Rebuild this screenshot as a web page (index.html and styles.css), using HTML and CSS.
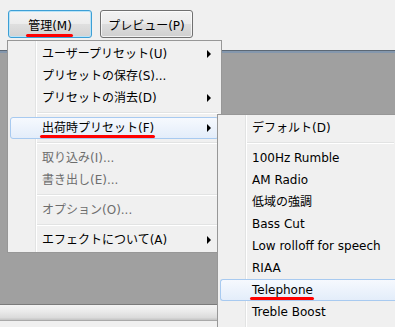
FILE: index.html
```html
<!DOCTYPE html>
<html lang="ja">
<head>
<meta charset="utf-8">
<link rel="stylesheet" href="styles.css">
</head>
<body>
<div class="window">
  <div class="toolbar">
    <button class="btn btn-focus"><span class="mark">管理(M)</span></button>
    <button class="btn btn-preview">プレビュー(P)</button>
  </div>
  <div class="rule"></div>
  <div class="pane"></div>
  <div class="statusbar"></div>

  <div class="menu menu-main">
    <div class="item"><span class="label">ユーザープリセット(U)</span><span class="arrow"></span></div>
    <div class="item"><span class="label">プリセットの保存(S)...</span></div>
    <div class="item"><span class="label">プリセットの消去(D)</span><span class="arrow"></span></div>
    <div class="sep"></div>
    <div class="item hot"><span class="label"><span class="mark">出荷時プリセット(F)</span></span><span class="arrow"></span></div>
    <div class="sep"></div>
    <div class="item off"><span class="label">取り込み(I)...</span></div>
    <div class="item off"><span class="label">書き出し(E)...</span></div>
    <div class="sep"></div>
    <div class="item off"><span class="label">オプション(O)...</span></div>
    <div class="sep"></div>
    <div class="item"><span class="label">エフェクトについて(A)</span><span class="arrow"></span></div>
  </div>

  <div class="menu menu-sub">
    <div class="item"><span class="label">デフォルト(D)</span></div>
    <div class="sep"></div>
    <div class="item"><span class="label">100Hz Rumble</span></div>
    <div class="item"><span class="label">AM Radio</span></div>
    <div class="item"><span class="label">低域の強調</span></div>
    <div class="item"><span class="label">Bass Cut</span></div>
    <div class="item"><span class="label">Low rolloff for speech</span></div>
    <div class="item"><span class="label">RIAA</span></div>
    <div class="item hot"><span class="label"><span class="mark">Telephone</span></span></div>
    <div class="item"><span class="label">Treble Boost</span></div>
  </div>
</div>
</body>
</html>
```
FILE: styles.css
```css
* { box-sizing: border-box; }

html, body {
  margin: 0;
  padding: 0;
  background: #f0f0f0;
}

body {
  width: 395px;
  height: 327px;
  overflow: hidden;
  font-family: "DejaVu Sans", "Noto Sans CJK JP", sans-serif;
  font-size: 12px;
  color: #000;
}

.window {
  position: relative;
  width: 395px;
  height: 327px;
  overflow: hidden;
  display: flex;
  flex-direction: column;
}

.toolbar {
  display: flex;
  gap: 8px;
  padding: 10px 0 12px 8px;
  height: 50px;
  background: #f0f0f0;
}

.btn {
  height: 28px;
  margin: 0;
  padding: 0;
  font: inherit;
  color: #000;
  border: 1px solid #707070;
  border-radius: 3px;
  background: linear-gradient(#f2f2f2 0%, #ebebeb 50%, #dddddd 51%, #cfcfcf 100%);
  box-shadow: inset 0 0 0 1px rgba(255,255,255,0.7);
  display: flex;
  align-items: center;
  justify-content: center;
}

.btn-focus {
  width: 84px;
  border-color: #3c9fd6;
  box-shadow: inset 0 0 0 1px #b9e3f7;
  background: linear-gradient(#f4f4f4 0%, #ececec 50%, #dfdfdf 51%, #d2d2d2 100%);
}

.btn-preview {
  width: 93px;
}

.rule {
  height: 3px;
  border-top: 1px solid #5c6875;
  background: #8497ad;
}

.pane {
  height: 251px;
  background: #a0a0a0;
}

.statusbar {
  flex: 1;
  border-top: 1px solid #7a7a7a;
  background:
    linear-gradient(#f4f4f4 0px, #ebebeb 6px, #dadada 13px, #c8c8c8 14px, #c8c8c8 15px, #a9a9a9 15px, #a9a9a9 16px, #f0f0f0 16px);
}

.mark {
  position: relative;
}

.mark::after {
  content: "";
  position: absolute;
  left: -2px;
  right: -1px;
  bottom: -3px;
  height: 3px;
  border-radius: 2px;
  background: #ff0000;
}

.btn .mark::after {
  bottom: -4px;
}

.menu {
  position: absolute;
  border: 1px solid #979797;
  background:
    linear-gradient(to right, transparent 27px, #e2e3e3 27px, #e2e3e3 28px, #ffffff 28px, #ffffff 29px, transparent 29px),
    #f0f0f0;
  padding: 2px 2px 1px 2px;
}

.menu-main {
  left: 7px;
  top: 40px;
  width: 215px;
}

.menu-sub {
  left: 217px;
  right: 0;
  top: 114px;
  bottom: 0;
  border-right: 0;
  border-bottom: 0;
  padding-right: 0;
  padding-bottom: 0;
  overflow: hidden;
}

.menu-sub .item {
  border-top-right-radius: 0;
  border-bottom-right-radius: 0;
  border-right: 0;
}

.item {
  height: 22px;
  display: flex;
  align-items: center;
  padding: 0 7px 0 31px;
  border: 1px solid transparent;
  border-radius: 3px;
  white-space: nowrap;
}

.item .label {
  flex: 1;
  line-height: 14px;
}

.item.off {
  color: #6d6d6d;
}

.item.hot {
  border-color: #a8caf0;
  background: linear-gradient(#f6f9fe, #e3edfa);
}

.menu-sub .item.hot {
  border-right: 0;
}

.arrow {
  width: 0;
  height: 0;
  border-left: 4px solid #000;
  border-top: 4px solid transparent;
  border-bottom: 4px solid transparent;
}

.sep {
  height: 8px;
  margin-left: 27px;
  margin-right: 1px;
  background: linear-gradient(transparent 3px, #e2e3e3 3px, #e2e3e3 4px, #ffffff 4px, #ffffff 5px, transparent 5px);
}
```
